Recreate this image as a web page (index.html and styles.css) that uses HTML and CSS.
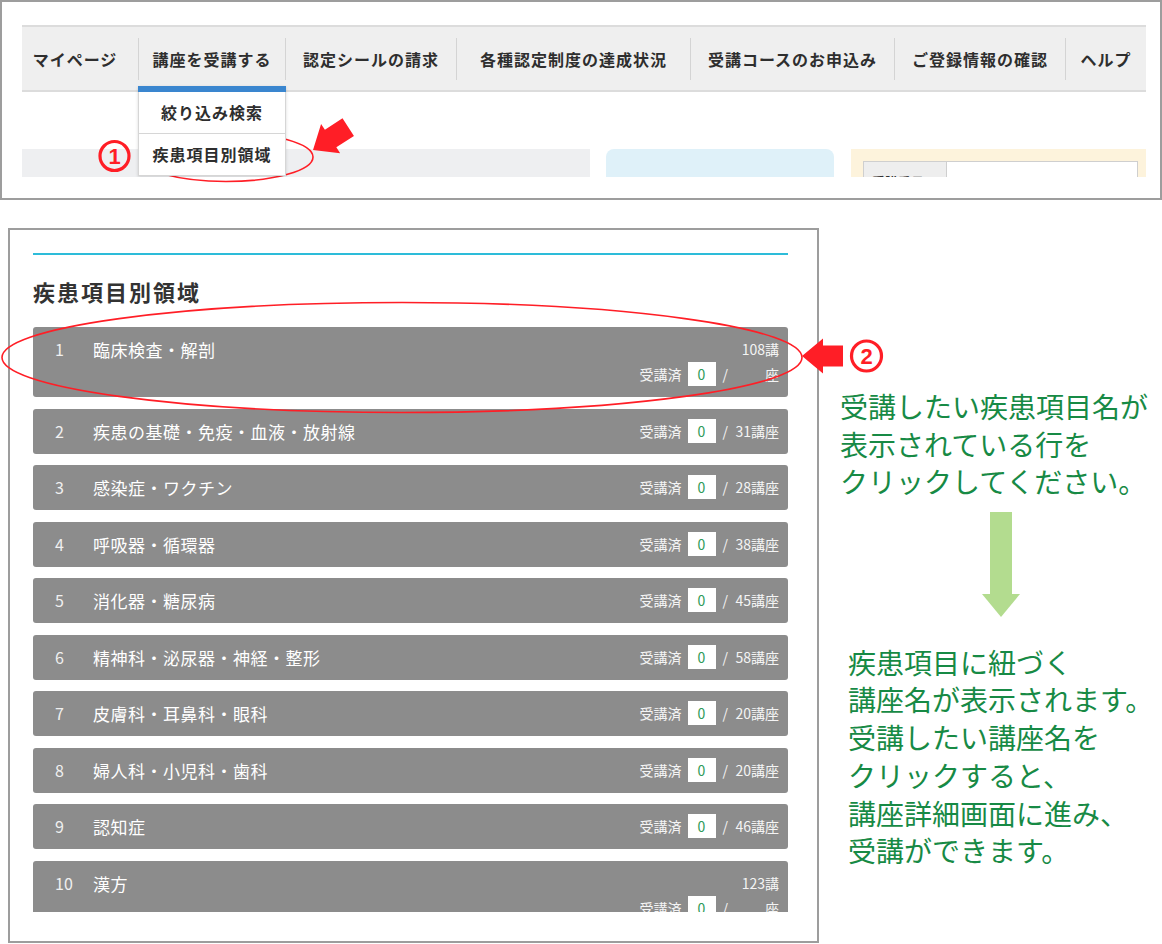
FILE: index.html
```html
<!DOCTYPE html>
<html lang="ja">
<head>
<meta charset="utf-8">
<title>疾患項目別領域から受講する</title>
<link rel="stylesheet" href="styles.css">
</head>
<body>
<div class="page">

    <!-- menu capture -->
    <div class="shot shot-top">
        <div class="shot-view top-view">
            <ul class="gnav">
                <li>マイページ</li>
                <li>講座を受講する
                    <ul class="sub">
                        <li>絞り込み検索</li>
                        <li>疾患項目別領域</li>
                    </ul>
                </li>
                <li>認定シールの請求</li>
                <li>各種認定制度の達成状況</li>
                <li>受講コースのお申込み</li>
                <li>ご登録情報の確認</li>
                <li>ヘルプ</li>
            </ul>
            <div class="panels">
                <div class="panel-grey"><span>受講状況</span></div>
                <div class="panel-blue"></div>
                <div class="panel-cream">
                    <div class="mini-table">
                        <div class="mini-head">受講番号</div>
                        <div class="mini-cell"></div>
                    </div>
                </div>
            </div>
        </div>
    </div>

    <div class="lower">
        <!-- list capture -->
        <div class="shot shot-list">
            <div class="shot-view list-view">
                <div class="rule"></div>
                <h2>疾患項目別領域</h2>
                <ul class="areas">
                    <li class="area"><span class="no">1</span><span class="name">臨床検査・解剖</span><span class="stat">受講済<span class="done">0</span><span class="sep">/</span><span class="total">108講座</span></span></li>
                    <li class="area"><span class="no">2</span><span class="name">疾患の基礎・免疫・血液・放射線</span><span class="stat">受講済<span class="done">0</span><span class="sep">/</span><span class="total">31講座</span></span></li>
                    <li class="area"><span class="no">3</span><span class="name">感染症・ワクチン</span><span class="stat">受講済<span class="done">0</span><span class="sep">/</span><span class="total">28講座</span></span></li>
                    <li class="area"><span class="no">4</span><span class="name">呼吸器・循環器</span><span class="stat">受講済<span class="done">0</span><span class="sep">/</span><span class="total">38講座</span></span></li>
                    <li class="area"><span class="no">5</span><span class="name">消化器・糖尿病</span><span class="stat">受講済<span class="done">0</span><span class="sep">/</span><span class="total">45講座</span></span></li>
                    <li class="area"><span class="no">6</span><span class="name">精神科・泌尿器・神経・整形</span><span class="stat">受講済<span class="done">0</span><span class="sep">/</span><span class="total">58講座</span></span></li>
                    <li class="area"><span class="no">7</span><span class="name">皮膚科・耳鼻科・眼科</span><span class="stat">受講済<span class="done">0</span><span class="sep">/</span><span class="total">20講座</span></span></li>
                    <li class="area"><span class="no">8</span><span class="name">婦人科・小児科・歯科</span><span class="stat">受講済<span class="done">0</span><span class="sep">/</span><span class="total">20講座</span></span></li>
                    <li class="area"><span class="no">9</span><span class="name">認知症</span><span class="stat">受講済<span class="done">0</span><span class="sep">/</span><span class="total">46講座</span></span></li>
                    <li class="area"><span class="no">10</span><span class="name">漢方</span><span class="stat">受講済<span class="done">0</span><span class="sep">/</span><span class="total">123講座</span></span></li>
                </ul>
            </div>
        </div>

        <div class="notes">
            <p class="note">受講したい疾患項目名が<br>表示されている行を<br>クリックしてください。</p>
            <svg class="down" width="38" height="105" viewBox="0 0 38 105">
                <rect x="8" y="0" width="22" height="83" fill="#b3dc8f"/>
                <polygon points="0,82 38,82 19,105" fill="#b3dc8f"/>
            </svg>
            <p class="note note-2">疾患項目に紐づく<br>講座名が表示されます。<br>受講したい講座名を<br>クリックすると、<br>講座詳細画面に進み、<br>受講ができます。</p>
        </div>
    </div>

    <!-- red annotations drawn over the captures -->
    <svg class="marks" width="1162" height="944" viewBox="0 0 1162 944">
        <ellipse cx="226" cy="157" rx="87" ry="24.5" fill="none" stroke="#ff1e26" stroke-width="1.6"/>
        <circle cx="114.5" cy="156" r="14.5" fill="none" stroke="#ff1e26" stroke-width="3.2"/>
        <text x="114.5" y="164" class="mark-num">1</text>
        <polygon transform="translate(313 150) rotate(-33)" points="0,0 21,-17.5 21,-10.5 42,-10.5 42,10.5 21,10.5 21,17.5" fill="#ff1e26"/>

        <ellipse cx="402" cy="357.5" rx="400" ry="55" fill="none" stroke="#ff1e26" stroke-width="1.6"/>
        <polygon transform="translate(802 356)" points="0,0 21,-17.5 21,-10.5 41,-10.5 41,10.5 21,10.5 21,17.5" fill="#ff1e26"/>
        <circle cx="866.5" cy="356" r="15" fill="none" stroke="#ff1e26" stroke-width="3.2"/>
        <text x="866.5" y="364" class="mark-num">2</text>
    </svg>

</div>
</body>
</html>
```

FILE: styles.css
```css
body {
    margin: 0;
    background: #fff;
    font-family: "Noto Sans CJK JP", "Noto Sans", sans-serif;
    color: #333;
}

.page {
    position: relative;
    width: 1162px;
    height: 944px;
    overflow: hidden;
}

.shot {
    box-sizing: border-box;
    border: 2px solid #9d9d9d;
    background: #fff;
}

.shot-view {
    box-sizing: border-box;
    overflow: hidden;
}

/* ---- menu capture ---- */

.shot-top {
    width: 1162px;
    height: 200px;
    padding: 0 14px 0 20px;
}

.top-view {
    height: 175px;
    padding-top: 23px;
}

.gnav {
    display: grid;
    grid-template-columns: 116px 147px 171px 234px 204px 171px 1fr;
    box-sizing: border-box;
    height: 67px;
    margin: 0;
    padding: 0;
    list-style: none;
    background: #efefef;
    border-top: 2px solid #dcdcdc;
    border-bottom: 2px solid #dcdcdc;
}

.gnav > li {
    position: relative;
    height: 42px;
    margin-top: 11px;
    line-height: 42px;
    text-align: center;
    font-size: 16px;
    font-weight: bold;
    letter-spacing: 1px;
    white-space: nowrap;
    color: #2e2e2e;
    border-left: 1px solid #d4d4d4;
}

.gnav > li:first-child {
    border-left: none;
    text-indent: -10px;
}

.sub {
    position: absolute;
    top: 48px;
    left: -1px;
    right: -1px;
    z-index: 2;
    margin: 0;
    padding: 0;
    list-style: none;
    background: #fff;
    border-top: 6px solid #3a86cf;
    box-shadow: 0 1px 3px rgba(0, 0, 0, 0.15);
}

.sub li {
    height: 42px;
    box-sizing: border-box;
    line-height: 41px;
    border: 1px solid #d6d6d6;
    border-top: none;
}

.panels {
    display: flex;
    height: 60px;
    margin-top: 57px;
}

.panel-grey {
    width: 568px;
    box-sizing: border-box;
    padding: 23px 0 0 18px;
    background: #eeeff1;
    font-size: 16px;
    font-weight: bold;
}

.panel-blue {
    width: 228px;
    margin-left: 16px;
    background: #dff1f9;
    border-radius: 8px 8px 0 0;
}

.panel-cream {
    width: 295px;
    margin-left: 17px;
    box-sizing: border-box;
    padding: 12px 8px 0 12px;
    background: #fdf3dc;
}

.mini-table {
    display: flex;
    height: 40px;
    background: #fff;
    border: 1px solid #cfcfcf;
}

.mini-head {
    width: 83px;
    box-sizing: border-box;
    padding: 10px 0 0 8px;
    background: #eeeeee;
    border-right: 1px solid #cfcfcf;
    font-size: 13px;
    font-weight: bold;
}

/* ---- list capture ---- */

.lower {
    display: flex;
    margin-top: 28px;
}

.shot-list {
    flex: none;
    width: 811px;
    height: 715px;
    margin-left: 8px;
    padding: 0 29px 29px 23px;
}

.list-view {
    height: 682px;
    padding-top: 23px;
}

.rule {
    border-top: 2px solid #2dbcd9;
}

.list-view h2 {
    margin: 21px 0 21px;
    font-size: 22px;
    line-height: 30px;
    letter-spacing: 2px;
    font-weight: bold;
    color: #333;
}

.areas {
    display: flex;
    flex-direction: column;
    gap: 11.5px;
    margin: 0;
    padding: 0;
    list-style: none;
}

.area {
    display: flex;
    align-items: flex-start;
    padding: 10px 9px 10px 22px;
    background: #8c8c8c;
    border-radius: 3px;
    color: #fff;
    line-height: 25px;
}

.no {
    width: 38px;
    flex: none;
    font-size: 16px;
    color: #f0f0f0;
}

.name {
    flex: 1;
    font-size: 17px;
    letter-spacing: 0.5px;
}

.stat {
    flex: none;
    font-size: 14px;
    color: #f4f4f4;
    text-align: right;
}

.done {
    display: inline-block;
    width: 28px;
    height: 24px;
    margin: 0 7px 0 6px;
    line-height: 24px;
    text-align: center;
    background: #fff;
    color: #2e9a58;
}

.sep {
    margin-right: 5px;
}

.total {
    display: inline-block;
    width: 46px;
    text-align: right;
}

/* ---- explanation ---- */

.notes {
    margin-left: 21px;
    color: #178a45;
}

.note {
    margin: 160px 0 0;
    font-size: 28px;
    line-height: 37.5px;
    white-space: nowrap;
}

.down {
    display: block;
    margin: 11px 0 0 142px;
}

.note-2 {
    margin-top: 27px;
    padding-left: 8px;
    line-height: 37.8px;
}

/* ---- red marks ---- */

.marks {
    position: absolute;
    top: 0;
    left: 0;
    pointer-events: none;
}

.mark-num {
    fill: #ff1e26;
    font-family: "Liberation Sans", Arial, sans-serif;
    font-weight: bold;
    font-size: 22px;
    text-anchor: middle;
}
```
